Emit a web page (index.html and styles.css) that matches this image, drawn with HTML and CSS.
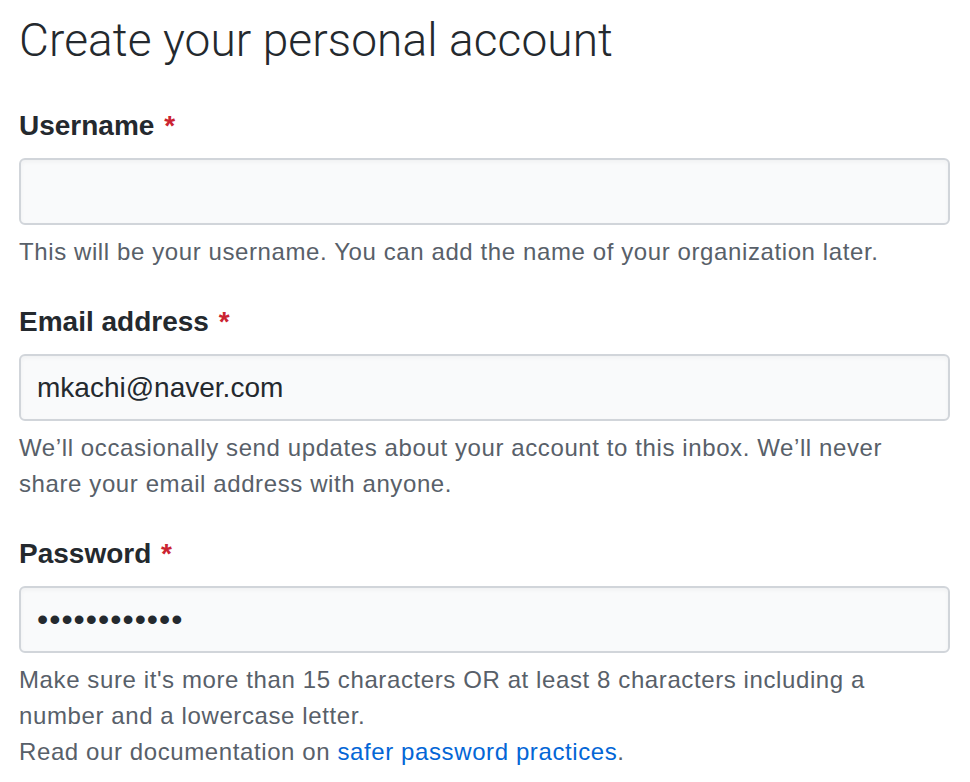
FILE: index.html
```html
<!DOCTYPE html>
<html lang="en">
<head>
<meta charset="utf-8">
<title>Create your personal account</title>
<link rel="stylesheet" href="styles.css">
</head>
<body>
<main class="page">
  <h1 class="title">Create your personal account</h1>
  <form class="form">
    <div class="group">
      <label class="label" for="username">Username <span class="req">*</span></label>
      <input class="input" id="username" type="text">
      <p class="note">This will be your username. You can add the name of your organization later.</p>
    </div>
    <div class="group">
      <label class="label" for="email">Email address <span class="req">*</span></label>
      <input class="input" id="email" type="text" value="mkachi@naver.com">
      <p class="note">We’ll occasionally send updates about your account to this inbox. We’ll never share your email address with anyone.</p>
    </div>
    <div class="group">
      <label class="label" for="password">Password <span class="req">*</span></label>
      <input class="input input-pass" id="password" type="password" value="abcdefghijkl">
      <p class="note">Make sure it's more than 15 characters OR at least 8 characters including a number and a lowercase letter.<br>Read our documentation on <a class="link" href="#">safer password practices</a>.</p>
    </div>
  </form>
</main>
</body>
</html>
```

FILE: styles.css
```css
html, body {
  margin: 0;
  padding: 0;
  background: #ffffff;
}

body {
  font-family: "Liberation Sans", Arial, Helvetica, sans-serif;
  color: #24292e;
}

.page {
  padding: 10px 20px 0 19px;
}

.title {
  margin: 0;
  font-family: Roboto, "Liberation Sans", sans-serif;
  font-weight: 300;
  font-size: 46px;
  line-height: 60px;
  letter-spacing: 0.1px;
  color: #24292e;
}

.form {
  display: flex;
  flex-direction: column;
  gap: 32px;
  margin-top: 36px;
}

.group {
  display: flex;
  flex-direction: column;
}

.label {
  display: block;
  font-size: 28px;
  line-height: 40px;
  font-weight: 700;
  margin-bottom: 12px;
}

.req {
  color: #cb2431;
  margin-left: 2px;
}

.input {
  box-sizing: border-box;
  width: 100%;
  height: 67px;
  margin: 0;
  padding: 0 14px 0 16px;
  border: 2px solid #d1d5da;
  border-radius: 6px;
  background: #f9fafb;
  font-family: "Liberation Sans", Arial, sans-serif;
  font-size: 28px;
  color: #24292e;
  outline: none;
  box-shadow: inset 0 2px 4px rgba(27, 31, 35, 0.04);
}

.input-pass {
  font-size: 32px;
  letter-spacing: 1px;
}

.note {
  margin: 9px 0 0;
  font-size: 24px;
  line-height: 36px;
  letter-spacing: 0.6px;
  color: #586069;
}

.link {
  color: #0366d6;
  text-decoration: none;
}
```
